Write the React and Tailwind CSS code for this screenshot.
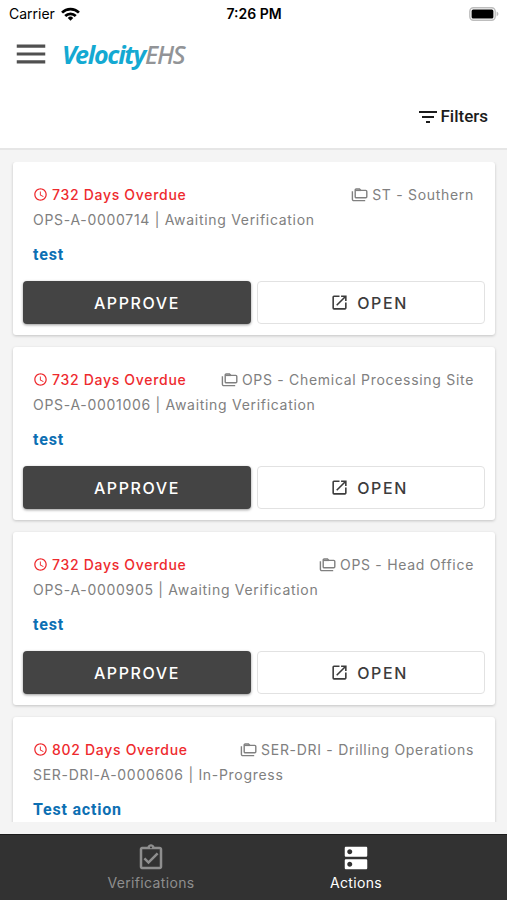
import {
  MdAccessTime,
  MdDns,
  MdFilterList,
  MdMenu,
  MdOpenInNew,
  MdOutlineAssignmentTurnedIn
} from 'react-icons/md';

const actions = [
  { id: 'OPS-A-0000714', days: 732, site: 'ST - Southern', status: 'Awaiting Verification', title: 'test' },
  { id: 'OPS-A-0001006', days: 732, site: 'OPS - Chemical Processing Site', status: 'Awaiting Verification', title: 'test' },
  { id: 'OPS-A-0000905', days: 732, site: 'OPS - Head Office', status: 'Awaiting Verification', title: 'test' },
  { id: 'SER-DRI-A-0000606', days: 802, site: 'SER-DRI - Drilling Operations', status: 'In-Progress', title: 'Test action' }
];

function StatusBar() {
  return (
    <div className="grid grid-cols-3 items-center h-7 pl-[9px] pr-2 text-sm text-black">
      <div className="flex items-center gap-[6px]">
        <span>Carrier</span>
        <svg width="19" height="14" viewBox="0 0 18 13" fill="none" stroke="black" strokeWidth="2.6">
          <path d="M1 5.2a11.5 11.5 0 0 1 16 0" />
          <path d="M4 8.3a7.2 7.2 0 0 1 10 0" />
          <path d="M9 12.8 6.4 10.2a3.8 3.8 0 0 1 5.2 0z" fill="black" stroke="none" />
        </svg>
      </div>
      <span className="text-center font-semibold">7:26 PM</span>
      <svg className="justify-self-end" width="30" height="14" viewBox="0 0 30 14">
        <rect x="0.8" y="0.8" width="25.4" height="12.4" rx="3.6" fill="white" stroke="#bdbdbd" strokeWidth="1.4" />
        <rect x="2.6" y="2.6" width="21.8" height="8.8" rx="1.5" fill="black" />
        <path d="M27.6 4.6c2.4 1 2.4 3.8 0 4.8z" fill="#bdbdbd" />
      </svg>
    </div>
  );
}

function Logo() {
  return (
    <a href="#home" className="flex font-['Noto_Sans',sans-serif] italic text-[25px] leading-8 text-[#14a9d2]">
      <span className="font-bold tracking-tighter">Velocity</span>
      <span className="font-medium tracking-tighter text-[#929497]">EHS</span>
    </a>
  );
}

// Two stacked folders, the back one only showing its left and bottom edge
function FoldersIcon() {
  return (
    <svg width="17" height="16" viewBox="0 0 17 16" fill="none" stroke="currentColor" strokeWidth="1.4">
      <path d="M4.2 4.2V3a1 1 0 0 1 1-1h3.3l1.4 1.4h4.9a1 1 0 0 1 1 1v5.4a1 1 0 0 1-1 1H5.2a1 1 0 0 1-1-1z" />
      <path d="M4.2 3.4h6" />
      <path d="M1.4 4.2v8a1.4 1.4 0 0 0 1.4 1.4h11.4" />
    </svg>
  );
}

function ActionCard({ action }) {
  return (
    <article className="shrink-0 rounded-[3px] bg-white px-[10px] pt-5 pb-[11px] shadow-[0_1px_3px_rgba(0,0,0,0.2)]">
      <div className="px-[10px] text-sm leading-[25px] tracking-wider text-[#808080]">
        <div className="flex justify-between">
          <span className="flex items-center gap-1 font-medium text-[#ee2a2e]">
            <MdAccessTime size={15} />
            {action.days} Days Overdue
          </span>
          <span className="flex items-center gap-1 pr-px">
            <FoldersIcon />
            {action.site}
          </span>
        </div>
        <p>{action.id} | {action.status}</p>
      </div>
      <h2 className="mt-[11px] px-[10px] font-['Roboto',sans-serif] text-base leading-6 font-bold tracking-wider text-[#0c6fb3]">
        {action.title}
      </h2>
      <div className="mt-[14px] grid grid-cols-2 gap-[6px] text-base tracking-widest">
        <button className="h-[43px] rounded bg-[#444444] font-medium text-white shadow-[0_1px_3px_rgba(0,0,0,0.4)]">
          APPROVE
        </button>
        <button className="flex h-[43px] items-center justify-center gap-2 rounded border border-[#e2e2e2] pr-1 font-medium text-[#3c3c3c]">
          <MdOpenInNew size={19} />
          OPEN
        </button>
      </div>
    </article>
  );
}

export default function App() {
  return (
    <div className="flex h-screen flex-col bg-[#f4f4f4] font-['Inter',sans-serif]">
      <header className="border-b-2 border-[#e6e6e6] bg-white">
        <StatusBar />
        <div className="flex h-[52px] items-center gap-3 pl-3">
          <button aria-label="Menu" className="text-[#505050]">
            <MdMenu size={38} />
          </button>
          <Logo />
        </div>
        <div className="flex h-[68px] justify-end pt-[25px] pr-[19px]">
          <button className="flex h-6 items-center font-['Roboto',sans-serif] text-[17px] font-medium text-[#1c1c1c]">
            <MdFilterList size={24} />
            Filters
          </button>
        </div>
      </header>

      <main className="flex min-h-0 flex-1 flex-col py-3">
        <div className="flex min-h-0 flex-1 flex-col gap-3 overflow-y-auto pr-3 pl-[13px] [scrollbar-width:none]">
          {actions.map((action) => (
            <ActionCard key={action.id} action={action} />
          ))}
        </div>
      </main>

      <nav className="flex h-[66px] justify-center border-t border-[#1c1c1c] bg-[#323232] pt-2 text-sm tracking-wide">
        <a href="#verifications" className="flex w-[205px] flex-col items-center text-[#8e8e8e]">
          <MdOutlineAssignmentTurnedIn size={30} />
          Verifications
        </a>
        <a href="#actions" className="flex w-[205px] flex-col items-center text-white">
          <MdDns size={30} />
          Actions
        </a>
      </nav>
    </div>
  );
}
